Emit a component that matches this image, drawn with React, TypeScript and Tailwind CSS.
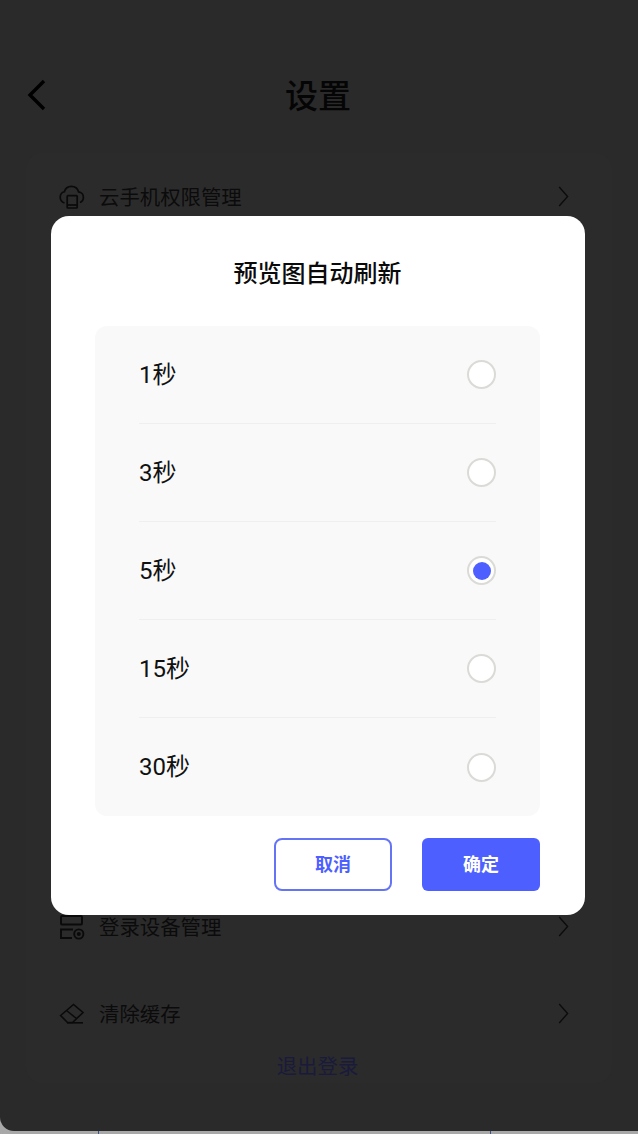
const FONT = '[font-family:Roboto,"Noto_Sans_CJK_SC",sans-serif]';

const options = ['1秒', '3秒', '5秒', '15秒', '30秒'];

function BackIcon() {
  return (
    <svg width="20" height="32" viewBox="0 0 20 32" fill="none" stroke="#000000" strokeWidth="3.4" className="absolute left-[27px] top-[79px]">
      <path d="M17 2 3 16l14 14" />
    </svg>
  );
}

function RowArrow() {
  return (
    <svg width="11" height="21" viewBox="0 0 11 21" fill="none" stroke="#0c0c0c" strokeWidth="1.4">
      <path d="M1.2 1 9.6 10.5 1.2 20" />
    </svg>
  );
}

function CloudPhoneIcon() {
  return (
    <svg width="26" height="26" viewBox="0 0 26 26" fill="none" stroke="#0a0a0a" strokeWidth="1.7">
      <path d="M5.5 19C2.8 18 1.2 15.8 1.2 13.2c0-2.7 1.8-4.8 4.2-5.4C6.2 4.6 9 2.4 12.4 2.4c3.5 0 6.3 2.3 7.2 5.5 2.8.3 4.8 2.6 4.8 5.4 0 2.3-1.3 4.3-3.4 5.3" />
      <rect x="8.2" y="11.6" width="10" height="12.4" rx="0.8" />
      <path d="M8.2 21h10" />
    </svg>
  );
}

function DeviceIcon() {
  return (
    <svg width="26" height="26" viewBox="0 0 26 26" fill="none" stroke="#0a0a0a" strokeWidth="1.9">
      <rect x="2" y="2" width="21" height="8.5" rx="1" />
      <path d="M14 15.5H2v8.5h11" />
      <circle cx="19.8" cy="20" r="4.6" />
      <circle cx="19.8" cy="20" r="1.1" fill="#0a0a0a" />
    </svg>
  );
}

function EraserIcon() {
  return (
    <svg width="26" height="26" viewBox="0 0 26 26" fill="none" stroke="#0a0a0a" strokeWidth="1.6">
      <path d="M1.6 14.5 14.5 3.5 24 11.5 13.5 21.5H8.5z" />
      <path d="M7.5 9.5 17.5 17.5" />
      <path d="M8 21.8h16" />
    </svg>
  );
}

function SettingRow({ icon, label }: { icon: React.ReactNode; label: string }) {
  return (
    <div className="flex h-[87px] items-center">
      <div className="flex w-[40px] shrink-0 items-center">{icon}</div>
      <span className="flex-1 pt-[3px] text-[20.4px] text-[#0b0b0b]">{label}</span>
      <RowArrow />
    </div>
  );
}

function OptionRow({ label, checked, last }: { label: string; checked: boolean; last: boolean }) {
  return (
    <div className={`flex h-[98px] items-center justify-between ${last ? '' : 'border-b border-[#efefef]'}`}>
      <span className="text-[24px] text-[#111111]">{label}</span>
      {checked ? (
        <span className="flex h-[29px] w-[29px] items-center justify-center rounded-full border-2 border-[#dadad6] bg-white">
          <span className="h-[18px] w-[18px] rounded-full bg-[#4d5fff]" />
        </span>
      ) : (
        <span className="h-[29px] w-[29px] rounded-full border-2 border-[#dadad6] bg-white" />
      )}
    </div>
  );
}

export default function App() {
  return (
    <div className={`relative h-[1134px] w-[638px] overflow-hidden bg-[#a8a8a8] ${FONT}`}>
      <div className="h-[1131px] rounded-bl-[14px] bg-[#2a2a2a]">
        {/* header */}
        <div className="flex h-[153px] items-start justify-center pr-[2px] pt-[72px]">
          <BackIcon />
          <h1 className="text-[33px] leading-[50px] font-medium text-[#050505]">设置</h1>
        </div>

        {/* settings behind the dialog */}
        <div className="mx-[26px] rounded-[16px] bg-[#2b2b2b] pl-[33px] pr-[43px]">
          <SettingRow icon={<CloudPhoneIcon />} label="云手机权限管理" />
          <div className="h-[643px]" />
          <SettingRow icon={<DeviceIcon />} label="登录设备管理" />
          <SettingRow icon={<EraserIcon />} label="清除缓存" />
          <div className="-mt-[6px] pl-[7px] text-center text-[20.4px] leading-[32px] text-[#1a1a3c]">退出登录</div>
        </div>
      </div>

      {/* bits of the page underneath, at the bottom edge */}
      <span className="absolute bottom-0 left-[98px] h-[3px] w-px bg-[#3a5088]" />
      <span className="absolute bottom-0 left-[490px] h-[3px] w-px bg-[#3a5088]" />

      {/* dialog */}
      <div className="absolute left-[51px] top-[216px] flex h-[699px] w-[534px] flex-col rounded-[18px] bg-white pl-[44px] pr-[45px]">
        <h2 className="mt-[40px] h-[36px] text-center text-[24px] leading-[36px] font-medium text-[#0a0a0a]">
          预览图自动刷新
        </h2>
        <div className="mt-[34px] rounded-[12px] bg-[#f9f9f9] px-[44px]">
          {options.map((option, i) => (
            <OptionRow key={option} label={option} checked={option === '5秒'} last={i === options.length - 1} />
          ))}
        </div>
        <div className="mt-[22px] flex justify-end gap-[30px]">
          <button className="h-[53px] w-[118px] rounded-[8px] border-2 border-[#6573f5] bg-white text-[18px] font-bold text-[#4d5fff]">
            取消
          </button>
          <button className="h-[53px] w-[118px] rounded-[6px] bg-[#4d5fff] text-[18px] font-bold text-white">
            确定
          </button>
        </div>
      </div>
    </div>
  );
}
